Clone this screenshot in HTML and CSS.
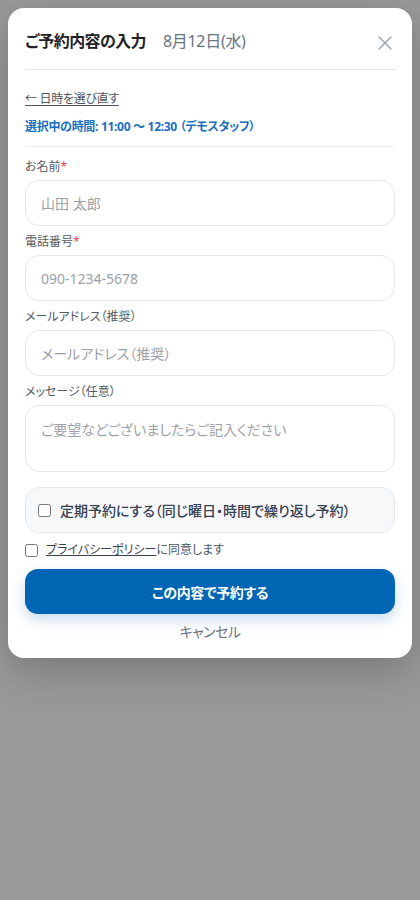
FILE: index.html
```html
<!DOCTYPE html>
<html lang="ja">
<head>
<meta charset="utf-8">
<link rel="stylesheet" href="styles.css">
</head>
<body>
<div class="overlay">
  <div class="modal">
    <div class="header">
      <div class="title">ご予約内容の入力<span class="date">8月12日(水)</span></div>
      <button class="close" aria-label="閉じる">
        <svg width="16" height="16" viewBox="0 0 16 16"><path d="M2 2 L14 14 M14 2 L2 14" stroke="#9aa0a8" stroke-width="1.4" fill="none" stroke-linecap="round"/></svg>
      </button>
    </div>
    <div class="info">
      <a class="back" href="#">← 日時を選び直す</a>
      <div class="slot">選択中の時間: 11:00 〜 12:30 （デモスタッフ）</div>
    </div>
    <form class="form">
      <label class="label">お名前<span class="req">*</span></label>
      <div class="input">山田 太郎</div>
      <label class="label">電話番号<span class="req">*</span></label>
      <div class="input">090-1234-5678</div>
      <label class="label">メールアドレス（推奨）</label>
      <div class="input">メールアドレス（推奨）</div>
      <label class="label">メッセージ（任意）</label>
      <div class="input textarea">ご要望などございましたらご記入ください</div>
      <label class="repeat"><input type="checkbox" class="cb"><span>定期予約にする（同じ曜日・時間で繰り返し予約）</span></label>
      <label class="agree"><input type="checkbox" class="cb"><span><a href="#" class="policy">プライバシーポリシー</a>に同意します</span></label>
      <button type="button" class="submit">この内容で予約する</button>
      <div class="cancel">キャンセル</div>
    </form>
  </div>
</div>
</body>
</html>
```
FILE: styles.css
```css
* { box-sizing: border-box; }
html, body { margin: 0; padding: 0; }
body {
  font-family: "Noto Sans", "Noto Sans CJK JP", sans-serif;
  font-feature-settings: "palt";
  background: #999999;
  width: 420px;
  height: 900px;
  overflow: hidden;
}
.overlay {
  padding: 8px;
}
.modal {
  background: #fff;
  border-radius: 16px;
  padding: 21px 17px 16px;
  box-shadow: 0 12px 40px rgba(0,0,0,0.22);
}
.header {
  display: flex;
  align-items: center;
  justify-content: space-between;
  height: 24px;
  margin-bottom: 16px;
  position: relative;
}
.header::after {
  content: "";
  position: absolute;
  left: 0; right: 0;
  bottom: -17px;
  height: 1px;
  background: #e3e5ea;
}
.title {
  font-size: 16px;
  font-weight: 700;
  color: #1f2328;
  line-height: 24px;
  white-space: nowrap;
  letter-spacing: -0.6px;
}
.date {
  font-weight: 400;
  color: #6b7280;
  margin-left: 17px;
  font-size: 16px;
  letter-spacing: -0.3px;
}
.close {
  border: 0;
  background: none;
  padding: 0;
  width: 16px;
  height: 16px;
  margin-right: 2px;
  margin-top: 4px;
  display: flex;
}
.info {
  padding-top: 21px;
  padding-bottom: 10px;
  border-bottom: 1px solid #eef0f3;
}
.back {
  display: block;
  font-size: 12px;
  line-height: 18px;
  color: #4b5563;
  text-decoration: underline;
  text-underline-offset: 2px;
  letter-spacing: -0.3px;
}
.slot {
  margin-top: 10px;
  font-size: 12px;
  line-height: 18px;
  font-weight: 700;
  color: #1a6fc0;
  letter-spacing: -0.3px;
}
.form {
  display: flex;
  flex-direction: column;
  padding-top: 11px;
}
.label {
  font-size: 12px;
  line-height: 18px;
  color: #555b63;
  margin-bottom: 4px;
}
.req { color: #e5484d; }
.input {
  height: 46px;
  border: 1px solid #e4e6ee;
  border-radius: 14px;
  padding: 0 15px;
  display: flex;
  align-items: center;
  font-size: 14px;
  color: #9ca1a8;
  margin-bottom: 7px;
}
.textarea {
  height: 67px;
  align-items: flex-start;
  padding-top: 13px;
  margin-bottom: 15px;
}
.repeat {
  height: 46px;
  background: #f7f8fa;
  border: 1px solid #e6e8ec;
  border-radius: 14px;
  display: flex;
  align-items: center;
  padding: 0 12px;
  gap: 9px;
  font-size: 14px;
  font-weight: 500;
  color: #374151;
  margin-bottom: 8px;
}
.cb {
  margin: 0;
  width: 13px;
  height: 13px;
  flex: none;
}
.agree {
  display: flex;
  align-items: center;
  gap: 8px;
  font-size: 12px;
  line-height: 18px;
  color: #4b5563;
  margin-bottom: 10px;
}
.policy {
  color: #374151;
  text-decoration: underline;
}
.submit {
  height: 45px;
  border: 0;
  border-radius: 13px;
  background: #0066b3;
  color: #fff;
  font-family: inherit;
  font-feature-settings: "palt";
  font-size: 14px;
  font-weight: 700;
  letter-spacing: -0.4px;
  box-shadow: 0 6px 14px rgba(0,102,179,0.22);
}
.cancel {
  margin-top: 8px;
  text-align: center;
  font-size: 14px;
  line-height: 20px;
  color: #6b7280;
  letter-spacing: -0.5px;
}
```
